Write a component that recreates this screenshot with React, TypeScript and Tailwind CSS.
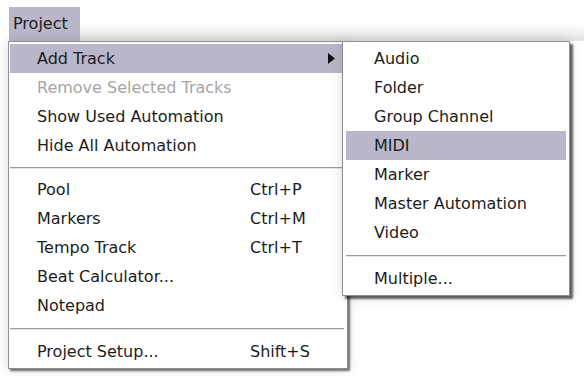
import React from "react";

type Item =
  | { kind: "sep"; h: string }
  | { kind: "item"; label: string; shortcut?: string; disabled?: boolean; active?: boolean; sub?: boolean };

const mainItems: Item[] = [
  { kind: "item", label: "Add Track", active: true, sub: true },
  { kind: "item", label: "Remove Selected Tracks", disabled: true },
  { kind: "item", label: "Show Used Automation" },
  { kind: "item", label: "Hide All Automation" },
  { kind: "sep", h: "h-[15px]" },
  { kind: "item", label: "Pool", shortcut: "Ctrl+P" },
  { kind: "item", label: "Markers", shortcut: "Ctrl+M" },
  { kind: "item", label: "Tempo Track", shortcut: "Ctrl+T" },
  { kind: "item", label: "Beat Calculator..." },
  { kind: "item", label: "Notepad" },
  { kind: "sep", h: "h-[17px]" },
  { kind: "item", label: "Project Setup...", shortcut: "Shift+S" },
];

const subItems: Item[] = [
  { kind: "item", label: "Audio" },
  { kind: "item", label: "Folder" },
  { kind: "item", label: "Group Channel" },
  { kind: "item", label: "MIDI", active: true },
  { kind: "item", label: "Marker" },
  { kind: "item", label: "Master Automation" },
  { kind: "item", label: "Video" },
  { kind: "sep", h: "h-[17px]" },
  { kind: "item", label: "Multiple..." },
];

function Separator({ h }: { h: string }) {
  return (
    <div className={`${h} flex items-center`}>
      <div className="w-full border-t border-[#9c9c9c] border-b-[#e4e4e4] border-b" />
    </div>
  );
}

function Row({ item, labelWidth, pad }: { item: Extract<Item, { kind: "item" }>; labelWidth: string; pad: string }) {
  return (
    <div
      className={`relative h-[29px] flex items-center ${pad} ${item.active ? "bg-[#b9b7c9]" : ""} ${
        item.disabled ? "text-[#a5a5a5]" : "text-[#1c1c1c]"
      }`}
    >
      <span className={`${labelWidth} whitespace-nowrap`}>{item.label}</span>
      {item.shortcut && <span className="whitespace-nowrap">{item.shortcut}</span>}
      {item.sub && (
        <svg className="absolute left-[318px] top-[9px]" width="8" height="11" viewBox="0 0 8 11">
          <polygon points="0,0 7,5.5 0,11" fill="#111" />
        </svg>
      )}
    </div>
  );
}

export default function App() {
  return (
    <div
      className="relative w-[584px] h-[376px] overflow-hidden bg-white text-[16px] leading-none"
      style={{ fontFamily: '"DejaVu Sans", Verdana, sans-serif' }}
    >
      <div className="h-[7px]" />
      <div className="flex">
        <div className="ml-[9px] w-[71px] h-[34px] bg-[#b9b7c9] flex items-center pl-[4px] text-[#1c1c1c]">
          Project
        </div>
        <div className="flex-1 h-[34px] bg-gradient-to-b from-white via-white to-[#e2e2e2]" />
      </div>

      <div className="relative ml-[8px] w-[340px]">
        <div className="border border-[#8f8f8f] bg-white py-[2px] pl-[1px] pr-[3px] shadow-[2px_2px_2px_rgba(0,0,0,0.55),0_0_12px_rgba(0,0,0,0.15)]">
          {mainItems.map((it, i) =>
            it.kind === "sep" ? (
              <Separator key={i} h={it.h} />
            ) : (
              <Row key={i} item={it} labelWidth="w-[213px]" pad="pl-[27px]" />
            )
          )}
        </div>

        <div className="absolute left-[334px] top-0 w-[228px] border border-[#8f8f8f] bg-white py-[2px] px-[3px] shadow-[3px_3px_2px_rgba(0,0,0,0.6),0_0_12px_rgba(0,0,0,0.15)]">
          {subItems.map((it, i) =>
            it.kind === "sep" ? (
              <Separator key={i} h={it.h} />
            ) : (
              <Row key={i} item={it} labelWidth="" pad="pl-[28px]" />
            )
          )}
        </div>
      </div>
    </div>
  );
}
